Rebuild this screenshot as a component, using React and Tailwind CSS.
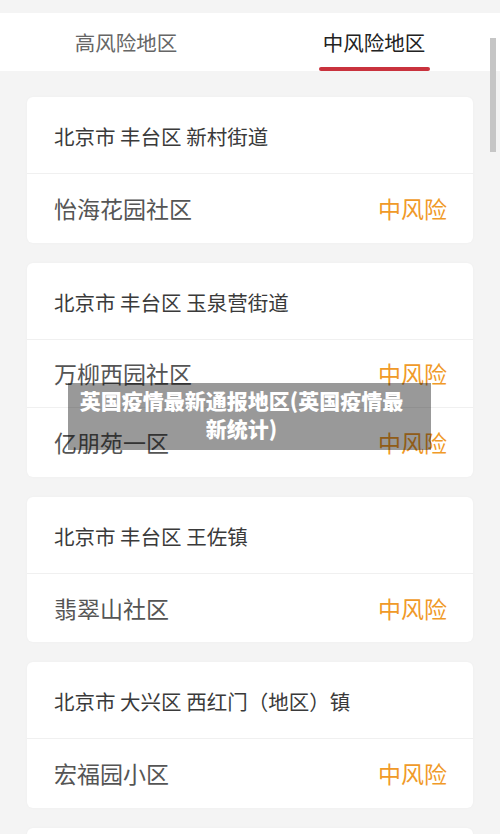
import React from 'react';

const groups = [
  { street: '北京市 丰台区 新村街道', places: ['怡海花园社区'] },
  { street: '北京市 丰台区 玉泉营街道', places: ['万柳西园社区', '亿朋苑一区'] },
  { street: '北京市 丰台区 王佐镇', places: ['翡翠山社区'] },
  { street: '北京市 大兴区 西红门（地区）镇', places: ['宏福园小区'] },
  { street: '北京市 大兴区 旧宫镇', places: ['旧宫东路社区'] },
];

const App = () => {
  return (
    <div
      className="relative h-[834px] overflow-hidden bg-[#f4f4f4]"
      style={{ fontFamily: '"Noto Sans CJK SC", "Noto Sans", sans-serif' }}
    >
      {/* Tabs */}
      <div className="mt-[13px] flex h-[58px] bg-white">
        <div className="flex flex-1 items-center justify-center pl-[2px]">
          <span className="text-[20.5px] text-[#666]">高风险地区</span>
        </div>
        <div className="relative flex flex-1 items-center justify-center pr-[2px]">
          <span className="text-[20.5px] text-[#222]">中风险地区</span>
          <div className="absolute bottom-0 left-[69px] h-[4px] w-[111px] rounded-full bg-[#c9323d]" />
        </div>
      </div>

      {/* List */}
      <div className="flex flex-col gap-[20px] px-[27px] pt-[26px]">
        {groups.map((g) => (
          <div key={g.street} className="overflow-hidden rounded-[6px] bg-white shadow-[0_0_3px_rgba(0,0,0,0.03)]">
            <div className="flex h-[77px] items-center border-b border-[#f0f0f0] px-[27px] pt-[3px]">
              <span className="text-[20.5px] text-[#3a3a3a]">{g.street}</span>
            </div>
            {g.places.map((p, i) => (
              <div
                key={p}
                className={`flex h-[68.5px] items-center justify-between px-[26px] ${i < g.places.length - 1 ? 'border-b border-[#f0f0f0]' : ''}`}
              >
                <span className="pl-[1px] text-[23px] text-[#555]">{p}</span>
                <span className="text-[23px] text-[#f09a28]">中风险</span>
              </div>
            ))}
          </div>
        ))}
      </div>

      {/* scrollbar */}
      <div className="absolute left-[490px] top-[38px] h-[114px] w-[6px] bg-[#c6c6c6]" />

      {/* Title overlay */}
      <div className="absolute left-[68px] top-[383px] flex h-[67px] w-[363px] items-center justify-center bg-black/40 pb-[5px] pl-[4px] pr-[20px]">
        <p className="text-center text-[21px] font-black leading-[28px] text-white">
          英国疫情最新通报地区(英国疫情最新统计)
        </p>
      </div>
    </div>
  );
};

export default App;
